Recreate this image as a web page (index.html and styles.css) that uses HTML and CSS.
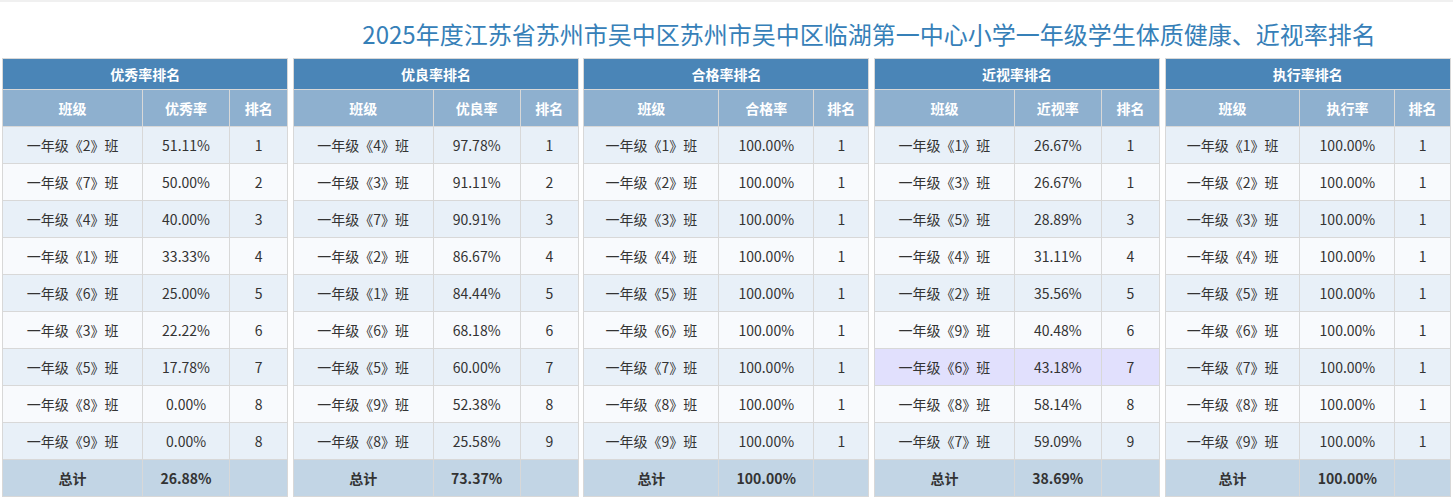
FILE: index.html
```html
<!DOCTYPE html>
<html lang="zh-CN">
<head>
<meta charset="utf-8">
<title>排名</title>
<link rel="stylesheet" href="styles.css">
</head>
<body>
<div class="page">
  <h1 class="title">2025年度江苏省苏州市吴中区苏州市吴中区临湖第一中心小学一年级学生体质健康、近视率排名</h1>
  <div class="boards">
    <div class="board">
      <table class="rank">
        <colgroup><col class="c-name"><col class="c-rate"><col class="c-rank"></colgroup>
        <thead>
          <tr class="h1"><th colspan="3">优秀率排名</th></tr>
          <tr class="h2"><th>班级</th><th>优秀率</th><th>排名</th></tr>
        </thead>
        <tbody>
          <tr><td>一年级《2》班</td><td>51.11%</td><td>1</td></tr>
          <tr><td>一年级《7》班</td><td>50.00%</td><td>2</td></tr>
          <tr><td>一年级《4》班</td><td>40.00%</td><td>3</td></tr>
          <tr><td>一年级《1》班</td><td>33.33%</td><td>4</td></tr>
          <tr><td>一年级《6》班</td><td>25.00%</td><td>5</td></tr>
          <tr><td>一年级《3》班</td><td>22.22%</td><td>6</td></tr>
          <tr><td>一年级《5》班</td><td>17.78%</td><td>7</td></tr>
          <tr><td>一年级《8》班</td><td>0.00%</td><td>8</td></tr>
          <tr><td>一年级《9》班</td><td>0.00%</td><td>8</td></tr>
        </tbody>
        <tfoot>
          <tr><td>总计</td><td>26.88%</td><td></td></tr>
        </tfoot>
      </table>
    </div>
    <div class="board">
      <table class="rank">
        <colgroup><col class="c-name"><col class="c-rate"><col class="c-rank"></colgroup>
        <thead>
          <tr class="h1"><th colspan="3">优良率排名</th></tr>
          <tr class="h2"><th>班级</th><th>优良率</th><th>排名</th></tr>
        </thead>
        <tbody>
          <tr><td>一年级《4》班</td><td>97.78%</td><td>1</td></tr>
          <tr><td>一年级《3》班</td><td>91.11%</td><td>2</td></tr>
          <tr><td>一年级《7》班</td><td>90.91%</td><td>3</td></tr>
          <tr><td>一年级《2》班</td><td>86.67%</td><td>4</td></tr>
          <tr><td>一年级《1》班</td><td>84.44%</td><td>5</td></tr>
          <tr><td>一年级《6》班</td><td>68.18%</td><td>6</td></tr>
          <tr><td>一年级《5》班</td><td>60.00%</td><td>7</td></tr>
          <tr><td>一年级《9》班</td><td>52.38%</td><td>8</td></tr>
          <tr><td>一年级《8》班</td><td>25.58%</td><td>9</td></tr>
        </tbody>
        <tfoot>
          <tr><td>总计</td><td>73.37%</td><td></td></tr>
        </tfoot>
      </table>
    </div>
    <div class="board">
      <table class="rank rank--full">
        <colgroup><col class="c-name"><col class="c-rate"><col class="c-rank"></colgroup>
        <thead>
          <tr class="h1"><th colspan="3">合格率排名</th></tr>
          <tr class="h2"><th>班级</th><th>合格率</th><th>排名</th></tr>
        </thead>
        <tbody>
          <tr><td>一年级《1》班</td><td>100.00%</td><td>1</td></tr>
          <tr><td>一年级《2》班</td><td>100.00%</td><td>1</td></tr>
          <tr><td>一年级《3》班</td><td>100.00%</td><td>1</td></tr>
          <tr><td>一年级《4》班</td><td>100.00%</td><td>1</td></tr>
          <tr><td>一年级《5》班</td><td>100.00%</td><td>1</td></tr>
          <tr><td>一年级《6》班</td><td>100.00%</td><td>1</td></tr>
          <tr><td>一年级《7》班</td><td>100.00%</td><td>1</td></tr>
          <tr><td>一年级《8》班</td><td>100.00%</td><td>1</td></tr>
          <tr><td>一年级《9》班</td><td>100.00%</td><td>1</td></tr>
        </tbody>
        <tfoot>
          <tr><td>总计</td><td>100.00%</td><td></td></tr>
        </tfoot>
      </table>
    </div>
    <div class="board">
      <table class="rank">
        <colgroup><col class="c-name"><col class="c-rate"><col class="c-rank"></colgroup>
        <thead>
          <tr class="h1"><th colspan="3">近视率排名</th></tr>
          <tr class="h2"><th>班级</th><th>近视率</th><th>排名</th></tr>
        </thead>
        <tbody>
          <tr><td>一年级《1》班</td><td>26.67%</td><td>1</td></tr>
          <tr><td>一年级《3》班</td><td>26.67%</td><td>1</td></tr>
          <tr><td>一年级《5》班</td><td>28.89%</td><td>3</td></tr>
          <tr><td>一年级《4》班</td><td>31.11%</td><td>4</td></tr>
          <tr><td>一年级《2》班</td><td>35.56%</td><td>5</td></tr>
          <tr><td>一年级《9》班</td><td>40.48%</td><td>6</td></tr>
          <tr class="hl"><td>一年级《6》班</td><td>43.18%</td><td>7</td></tr>
          <tr><td>一年级《8》班</td><td>58.14%</td><td>8</td></tr>
          <tr><td>一年级《7》班</td><td>59.09%</td><td>9</td></tr>
        </tbody>
        <tfoot>
          <tr><td>总计</td><td>38.69%</td><td></td></tr>
        </tfoot>
      </table>
    </div>
    <div class="board">
      <table class="rank rank--full">
        <colgroup><col class="c-name"><col class="c-rate"><col class="c-rank"></colgroup>
        <thead>
          <tr class="h1"><th colspan="3">执行率排名</th></tr>
          <tr class="h2"><th>班级</th><th>执行率</th><th>排名</th></tr>
        </thead>
        <tbody>
          <tr><td>一年级《1》班</td><td>100.00%</td><td>1</td></tr>
          <tr><td>一年级《2》班</td><td>100.00%</td><td>1</td></tr>
          <tr><td>一年级《3》班</td><td>100.00%</td><td>1</td></tr>
          <tr><td>一年级《4》班</td><td>100.00%</td><td>1</td></tr>
          <tr><td>一年级《5》班</td><td>100.00%</td><td>1</td></tr>
          <tr><td>一年级《6》班</td><td>100.00%</td><td>1</td></tr>
          <tr><td>一年级《7》班</td><td>100.00%</td><td>1</td></tr>
          <tr><td>一年级《8》班</td><td>100.00%</td><td>1</td></tr>
          <tr><td>一年级《9》班</td><td>100.00%</td><td>1</td></tr>
        </tbody>
        <tfoot>
          <tr><td>总计</td><td>100.00%</td><td></td></tr>
        </tfoot>
      </table>
    </div>
  </div>
</div>
</body>
</html>
```
FILE: styles.css
```css
* { box-sizing: border-box; }
html, body { margin: 0; padding: 0; background: #fff; }
body {
  font-family: "Noto Sans CJK SC", "Noto Sans", sans-serif;
  color: #333;
}
.page {
  border-top: 2px solid #f0f0f0;
}
.title {
  margin: 0;
  height: 56px;
  padding: 14px 0 0 285px;
  line-height: 36px;
  font-size: 24px;
  font-weight: normal;
  color: #3680b8;
  text-align: center;
  white-space: nowrap;
}
.boards {
  display: flex;
}
.board {
  flex: 1 1 0;
  min-width: 0;
  padding: 0 2.3px;
}
.rank {
  width: 100%;
  table-layout: fixed;
  border-collapse: collapse;
  border: 1px solid #d4d4d4;
  font-size: 14px;
  text-align: center;
}
.rank .c-name { width: 49%; }
.rank .c-rate { width: 30.6%; }
.rank .c-rank { width: 20.4%; }
.rank--full .c-name { width: 47.3%; }
.rank--full .c-rate { width: 33.3%; }
.rank--full .c-rank { width: 19.4%; }
.rank th, .rank td {
  border: 1px solid #d8d8d8;
  padding: 0 2px;
  white-space: nowrap;
  overflow: hidden;
}
.rank th { color: #fff; font-weight: bold; }
.rank .h1 { height: 31px; background: #4a85b7; }
.rank .h2 { height: 37px; background: #8eb0cf; }
.rank tbody tr { height: 37px; background: #f8fafd; }
.rank tbody tr:nth-child(odd) { background: #e8f0f8; }
.rank tbody tr.hl { background: #e1e0fd; }
.rank tfoot tr { height: 37px; background: #c2d5e5; font-weight: bold; }
```
